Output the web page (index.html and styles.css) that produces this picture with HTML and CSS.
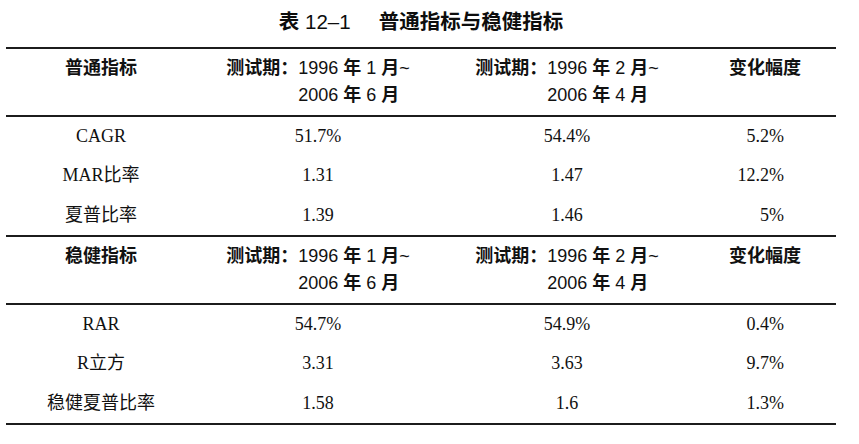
FILE: index.html
```html
<!DOCTYPE html>
<html lang="zh-CN">
<head>
<meta charset="utf-8">
<title>表 12–1 普通指标与稳健指标</title>
<link rel="stylesheet" href="styles.css">
</head>
<body>
<div class="doc">
  <h1 class="title"><span class="hz">表</span> 12–1<span class="hz name">普通指标与稳健指标</span></h1>
  <div class="tbl">
    <div class="row head">
      <div class="cell c1"><span class="hz">普通指标</span></div>
      <div class="cell c2"><div class="period"><div><span class="hz">测试期：</span>1996 <span class="hz">年</span> 1 <span class="hz">月</span>~</div><div class="cont">2006 <span class="hz">年</span> 6 <span class="hz">月</span></div></div></div>
      <div class="cell c3"><div class="period"><div><span class="hz">测试期：</span>1996 <span class="hz">年</span> 2 <span class="hz">月</span>~</div><div class="cont">2006 <span class="hz">年</span> 4 <span class="hz">月</span></div></div></div>
      <div class="cell c4"><span class="hz">变化幅度</span></div>
    </div>
    <div class="row data">
      <div class="cell c1">CAGR</div>
      <div class="cell c2">51.7%</div>
      <div class="cell c3">54.4%</div>
      <div class="cell c4">5.2%</div>
    </div>
    <div class="row data">
      <div class="cell c1">MAR比率</div>
      <div class="cell c2">1.31</div>
      <div class="cell c3">1.47</div>
      <div class="cell c4">12.2%</div>
    </div>
    <div class="row data">
      <div class="cell c1">夏普比率</div>
      <div class="cell c2">1.39</div>
      <div class="cell c3">1.46</div>
      <div class="cell c4">5%</div>
    </div>
    <div class="row head second">
      <div class="cell c1"><span class="hz">稳健指标</span></div>
      <div class="cell c2"><div class="period"><div><span class="hz">测试期：</span>1996 <span class="hz">年</span> 1 <span class="hz">月</span>~</div><div class="cont">2006 <span class="hz">年</span> 6 <span class="hz">月</span></div></div></div>
      <div class="cell c3"><div class="period"><div><span class="hz">测试期：</span>1996 <span class="hz">年</span> 2 <span class="hz">月</span>~</div><div class="cont">2006 <span class="hz">年</span> 4 <span class="hz">月</span></div></div></div>
      <div class="cell c4"><span class="hz">变化幅度</span></div>
    </div>
    <div class="row data">
      <div class="cell c1">RAR</div>
      <div class="cell c2">54.7%</div>
      <div class="cell c3">54.9%</div>
      <div class="cell c4">0.4%</div>
    </div>
    <div class="row data">
      <div class="cell c1">R立方</div>
      <div class="cell c2">3.31</div>
      <div class="cell c3">3.63</div>
      <div class="cell c4">9.7%</div>
    </div>
    <div class="row data">
      <div class="cell c1">稳健夏普比率</div>
      <div class="cell c2">1.58</div>
      <div class="cell c3">1.6</div>
      <div class="cell c4">1.3%</div>
    </div>
  </div>
</div>
</body>
</html>
```

FILE: styles.css
```css
html, body {
  margin: 0;
  padding: 0;
  background: #ffffff;
}

.doc {
  width: 830px;
  padding: 8px 0 0 6px;
  color: #111111;
}

.title {
  margin: 0 0 11px 0;
  font-family: "Liberation Sans", "Noto Sans CJK SC", sans-serif;
  font-weight: 400;
  font-size: 20.5px;
  line-height: 28px;
  text-align: center;
  color: #0d0d0d;
}

.hz {
  font-weight: 700;
}

.title .name {
  margin-left: 28px;
}

.tbl {
  border-top: 2px solid #1c1c1c;
  border-bottom: 2px solid #1c1c1c;
}

.row {
  display: grid;
  grid-template-columns: 190px 244px 254px 142px;
}

.head {
  padding: 6px 0;
  border-bottom: 2px solid #1c1c1c;
  font-family: "Liberation Sans", "Noto Sans CJK SC", sans-serif;
  font-weight: 400;
  font-size: 18px;
  line-height: 27px;
}

.head.second {
  border-top: 2px solid #1c1c1c;
}

.head .cell {
  text-align: center;
}

.period {
  display: inline-block;
  text-align: left;
}

.period .cont {
  padding-left: 4em;
}

.data {
  font-family: "Liberation Serif", "Noto Sans CJK SC", serif;
  font-size: 18px;
  line-height: 39.33px;
}

.data .cell {
  text-align: center;
}

.data .c4 {
  text-align: right;
  padding-right: 52px;
}
```
